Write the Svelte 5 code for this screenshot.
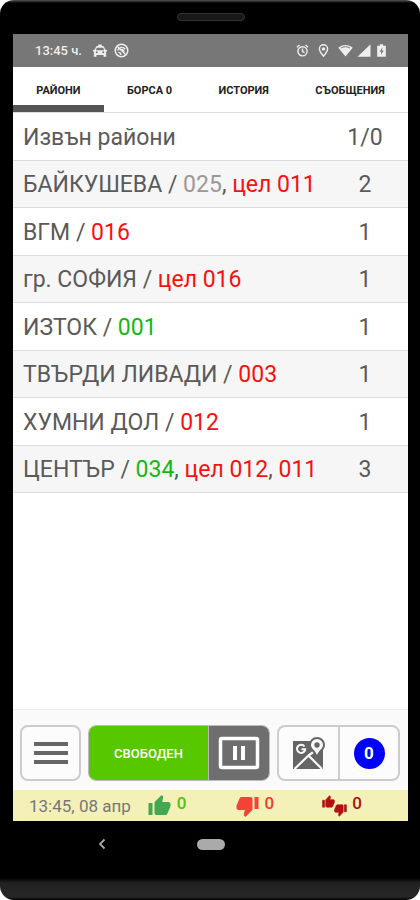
<script>
  const tabs = ['РАЙОНИ', 'БОРСА 0', 'ИСТОРИЯ', 'СЪОБЩЕНИЯ'];
  let active = $state(0);

  const rows = [
    { name: 'Извън райони', cars: [], count: '1/0' },
    { name: 'БАЙКУШЕВА', cars: [['025', 'away'], ['цел 011', 'busy']], count: '2' },
    { name: 'ВГМ', cars: [['016', 'busy']], count: '1' },
    { name: 'гр. СОФИЯ', cars: [['цел 016', 'busy']], count: '1' },
    { name: 'ИЗТОК', cars: [['001', 'free']], count: '1' },
    { name: 'ТВЪРДИ ЛИВАДИ', cars: [['003', 'busy']], count: '1' },
    { name: 'ХУМНИ ДОЛ', cars: [['012', 'busy']], count: '1' },
    { name: 'ЦЕНТЪР', cars: [['034', 'free'], ['цел 012', 'busy'], ['011', 'busy']], count: '3' }
  ];
</script>

{#snippet thumbUp()}
  <path d="M1 21h4V9H1v12zm22-11c0-1.1-.9-2-2-2h-6.31l.95-4.57.03-.32c0-.41-.17-.79-.44-1.06L14.17 1 7.59 7.59C7.22 7.95 7 8.45 7 9v10c0 1.1.9 2 2 2h9c.83 0 1.54-.5 1.84-1.22l3.02-7.05c.09-.23.14-.47.14-.73v-2z" />
{/snippet}

{#snippet thumbDown()}
  <path d="M15 3H6c-.83 0-1.54.5-1.84 1.22l-3.02 7.05c-.09.23-.14.47-.14.73v2c0 1.1.9 2 2 2h6.31l-.95 4.57-.03.32c0 .41.17.79.44 1.06L9.83 23l6.59-6.59c.36-.36.58-.86.58-1.41V5c0-1.1-.9-2-2-2zm4 0v12h4V3h-4z" />
{/snippet}

<div class="phone">
  <div class="bezel"><span class="speaker"></span></div>

  <div class="screen">
    <header class="status">
      <span class="clock">13:45 ч.</span>
      <svg class="taxi" width="14" height="14" viewBox="0 0 24 24" aria-hidden="true">
        <path d="M21 10l-2.2-5.2C18.500 4 17.900 3.500 17 3.500h-2V1H9v2.500H7c-.9 0-1.500.5-1.800 1.300L3 10H0v3h1.500v9H6v-3h12v3h4.500v-9H24v-3zM6.500 6.500h11L19 10.500H5zM6.500 16a1.700 1.700 0 1 1 0-3.400 1.700 1.700 0 0 1 0 3.400zm11 0a1.700 1.700 0 1 1 0-3.400 1.700 1.700 0 0 1 0 3.400z" />
      </svg>
      <svg width="15" height="15" viewBox="0 0 24 24" aria-hidden="true">
        <circle cx="12" cy="12" r="10" fill="none" stroke="#eee" stroke-width="2.500" />
        <path d="M5 5l14 14M6 12c1-5 8-7 12-2M9 11c3-2 7 0 7 4M7 15c2 0 4 1 4 4" fill="none" stroke="#eee" stroke-width="2.200" />
      </svg>
      <span class="grow"></span>
      <div class="signals">
        <svg width="13" height="13" viewBox="0 0 24 24" aria-hidden="true">
          <g fill="none" stroke="#eee" stroke-width="2.600">
            <circle cx="12" cy="13.500" r="8.500" />
            <path d="M12 8.500v5.500l4 2M1.500 6L6.500 1.800M22.500 6L17.500 1.800" />
          </g>
        </svg>
        <svg width="13" height="13" viewBox="0 0 24 24" aria-hidden="true">
          <path d="M12 1.500c-4.300 0-7.500 3.200-7.500 7.300C4.500 14 12 22.500 12 22.500S19.500 14 19.500 8.800c0-4.100-3.200-7.300-7.500-7.300z" fill="none" stroke="#eee" stroke-width="2.600" />
          <circle cx="12" cy="9" r="3.200" />
        </svg>
        <svg width="15" height="13" viewBox="0 0 28 24" aria-hidden="true">
          <path d="M14 23L.5 7C4 3.500 8.500 1.500 14 1.500S24 3.500 27.500 7z" />
          <path d="M5.500 7.500c5-3.500 12-3.500 17 0" fill="none" stroke="#777" stroke-width="1.800" />
        </svg>
        <svg width="14" height="13" viewBox="0 0 24 24" aria-hidden="true"><path d="M0 23.500L24 .5v23z" /></svg>
        <svg width="13" height="13" viewBox="0 0 24 24" aria-hidden="true">
          <path d="M15 3V.5H9V3H4v20.500h16V3z" />
          <path d="M13.500 6.500L8.500 14.500h3V20l4.500-8h-3z" fill="#777" />
        </svg>
      </div>
    </header>

    <nav class="tabs">
      {#each tabs as tab, i}
        <button class="tab" class:active={active === i} onclick={() => (active = i)}>{tab}</button>
      {/each}
    </nav>

    <main>
      <table>
        <tbody>
          {#each rows as row}
            <tr>
              <td>{row.name}{#if row.cars.length}{' / '}{/if}{#each row.cars as [label, state], i}{#if i}{', '}{/if}<span class={state}>{label}</span>{/each}</td>
              <td class="count">{row.count}</td>
            </tr>
          {/each}
        </tbody>
      </table>
    </main>

    <div class="toolbar">
      <button class="box menu" aria-label="Меню"><i></i><i></i><i></i></button>
      <div class="group state">
        <button class="free-btn">СВОБОДЕН</button>
        <button class="pause" aria-label="Пауза">
          <svg width="42" height="34" viewBox="0 0 42 34" aria-hidden="true">
            <rect x="2.500" y="2.500" width="37" height="29" rx="1.500" fill="none" stroke="#fff" stroke-width="3.500" />
            <path d="M15 10h4v14h-4zM23 10h4v14h-4z" fill="#fff" />
          </svg>
        </button>
      </div>
      <div class="group box">
        <button class="map" aria-label="Карта">
          <svg width="34" height="34" viewBox="0 0 34 34" aria-hidden="true">
            <path d="M1 5h30v28H1z" fill="#666" />
            <path d="M2.500 33L16.500 19.500 30 33M16.500 19.500L24 14" fill="none" stroke="#fafafa" stroke-width="2.200" />
            <path d="M12.500 10.500A4.100 4.100 0 1 0 13.200 13.300H9.500" fill="none" stroke="#fafafa" stroke-width="2" />
            <path d="M25 1a8 8 0 0 0-8 8c0 4.500 4.500 6.500 8 13 3.500-6.500 8-8.500 8-13a8 8 0 0 0-8-8z" fill="#666" />
            <path d="M25 3a6 6 0 0 0-6 6c0 3.500 4 5 6 10 2-5 6-6.500 6-10a6 6 0 0 0-6-6z" fill="#fafafa" />
            <circle cx="25" cy="9" r="2.700" fill="#666" />
          </svg>
        </button>
        <button class="orders"><span>0</span></button>
      </div>
    </div>

    <footer>
      <span class="date">13:45, 08 апр</span>
      <div class="votes">
        <span class="vote up">
          <svg width="25" height="24" viewBox="0 0 24 24" aria-hidden="true">{@render thumbUp()}</svg><b>0</b>
        </span>
        <span class="vote down">
          <svg width="25" height="24" viewBox="0 0 24 24" aria-hidden="true">{@render thumbDown()}</svg><b>0</b>
        </span>
        <span class="vote mixed">
          <svg width="25" height="24" viewBox="0 0 25 24" aria-hidden="true">
            <g transform="translate(0 1) scale(.54 .58)">{@render thumbUp()}</g>
            <g transform="translate(12 9) scale(.54 .58)">{@render thumbDown()}</g>
          </svg><b>0</b>
        </span>
      </div>
    </footer>
  </div>

  <div class="navbar">
    <button class="back" aria-label="Назад">
      <svg width="8" height="12" viewBox="0 0 8 12" aria-hidden="true"><path d="M6.500 1.500L2 6l4.500 4.500" fill="none" stroke="#aaa" stroke-width="1.800" /></svg>
    </button>
    <button class="home" aria-label="Начало"></button>
    <span></span>
  </div>
</div>

<style>
  :global(body) {
    margin: 0;
    background: #fff;
  }
  .phone {
    box-sizing: border-box;
    min-height: 100vh;
    display: flex;
    flex-direction: column;
    padding: 0 12px 0 13px;
    border-radius: 14px;
    background: linear-gradient(#555 0, #000 3px, #000 calc(100% - 22px), #222 calc(100% - 17px), #262626 calc(100% - 3px), #000 100%);
    font-family: Roboto, "Noto Sans", sans-serif;
    color: #5a5a5a;
  }
  button {
    margin: 0;
    padding: 0;
    border: 0;
    background: none;
    font: inherit;
    color: inherit;
  }
  svg {
    display: block;
    flex: none;
    fill: #eee;
  }
  .bezel {
    height: 34px;
    display: flex;
    align-items: center;
    justify-content: center;
  }
  .speaker {
    box-sizing: border-box;
    width: 68px;
    height: 8px;
    border: 1px solid #333;
    border-radius: 4px;
    background: #181818;
  }
  .screen {
    flex: 1;
    display: flex;
    flex-direction: column;
    background: #fff;
  }
  .status {
    height: 33px;
    display: flex;
    align-items: center;
    padding: 0 20px 0 22px;
    background: #777;
    color: #eee;
  }
  .clock {
    font-size: 13px;
    font-weight: 500;
    margin-right: 11px;
  }
  .taxi {
    margin-right: 7px;
  }
  .grow {
    flex: 1;
  }
  .signals {
    display: flex;
    gap: 4px;
  }
  .signals svg:nth-child(1),
  .signals svg:nth-child(2) {
    margin-right: 4px;
  }
  .tabs {
    height: 45px;
    display: flex;
    border-bottom: 1px solid #ddd;
  }
  .tab {
    flex: 1 0 auto;
    padding: 9px 20px 0;
    border-bottom: 7px solid transparent;
    font-size: 11px;
    font-weight: 700;
    color: #222;
  }
  .tab.active {
    border-bottom-color: #555;
  }
  main {
    flex: 1;
  }
  table {
    width: 100%;
    height: 380px;
    border-collapse: separate;
    border-spacing: 0;
    font-size: 23px;
    line-height: 28px;
  }
  tr:nth-child(even) {
    background: #f6f6f6;
  }
  td {
    padding: 3px 0 0 10px;
    border-bottom: 1px solid #ddd;
    white-space: pre;
  }
  .count {
    width: 86px;
    padding-left: 0;
    text-align: center;
  }
  .away {
    color: #999;
  }
  .busy {
    color: #f81010;
  }
  .free {
    color: #14b814;
  }
  .toolbar {
    display: flex;
    gap: 7px;
    padding: 15px 8px 9px 7px;
    border-top: 1px solid #eee;
    background: #fafafa;
  }
  .box {
    box-sizing: border-box;
    border: 2px solid #ccc;
    border-radius: 8px;
    background: #fcfcfc;
  }
  .menu {
    width: 61px;
    height: 56px;
    display: flex;
    flex-direction: column;
    align-items: center;
    justify-content: center;
    gap: 5px;
  }
  .menu i {
    width: 34px;
    height: 4px;
    background: #666;
  }
  .group {
    display: flex;
    height: 56px;
    overflow: hidden;
  }
  .group button {
    display: flex;
    align-items: center;
    justify-content: center;
  }
  .state {
    flex: 1;
    box-sizing: border-box;
    border: 1px solid #bbb;
    border-radius: 8px;
  }
  .group .free-btn {
    flex: 1;
    background: #57c800;
    color: #fff;
    font-size: 13px;
    font-weight: 500;
  }
  .group .pause {
    width: 61px;
    background: #6e6e6e;
    border-left: 1px solid #bbb;
  }
  .map {
    width: 59px;
  }
  .group .orders {
    width: 60px;
    border-left: 2px solid #ccc;
  }
  .orders span {
    width: 31px;
    height: 31px;
    border-radius: 50%;
    background: #00f;
    color: #fff;
    font-size: 17px;
    font-weight: 700;
    line-height: 31px;
  }
  footer {
    height: 31px;
    display: flex;
    align-items: center;
    padding: 0 46px 0 16px;
    background: #f3f0b8;
  }
  .date {
    font-size: 17px;
    color: #777;
  }
  .votes {
    flex: 1;
    display: flex;
    justify-content: space-between;
    margin-left: 16px;
  }
  .vote {
    display: flex;
    gap: 5px;
    font-size: 17px;
    line-height: 18px;
  }
  .vote b {
    font-weight: 500;
  }
  .up {
    color: #55c010;
  }
  .up svg {
    fill: #43a852;
  }
  .down {
    color: #f03a30;
  }
  .down svg {
    fill: #f44336;
  }
  .mixed {
    color: #a81010;
  }
  .mixed svg {
    fill: #b01010;
    stroke: #b01010;
    stroke-width: 1px;
  }
  .navbar {
    height: 79px;
    box-sizing: border-box;
    display: grid;
    grid-template-columns: 1fr 28px 1fr;
    align-items: start;
    padding-top: 17px;
  }
  .back {
    justify-self: center;
    margin-right: 5px;
  }
  .home {
    height: 11px;
    margin-top: 1px;
    border-radius: 6px;
    background: #aaa;
  }
</style>
